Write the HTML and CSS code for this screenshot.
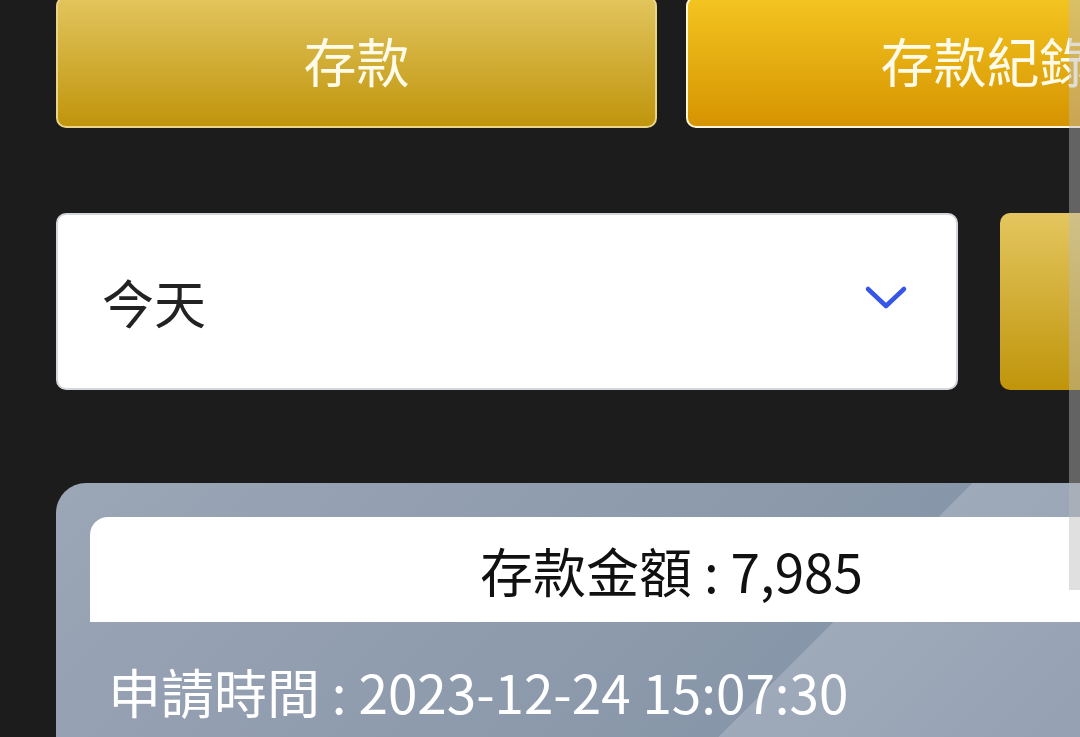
FILE: index.html
```html
<!DOCTYPE html>
<html lang="zh-Hant">
<head>
  <meta charset="UTF-8">
  <meta name="viewport" content="width=device-width, initial-scale=1.0">
  <title>存款紀錄</title>
  <link rel="stylesheet" href="styles.css">
</head>
<body>
  <div class="page">
    <div class="tabs">
      <button class="tab tab-gold">存款</button>
      <button class="tab tab-amber">存款紀錄</button>
    </div>

    <div class="filter">
      <div class="select">
        <span>今天</span>
        <svg class="chevron" width="44" height="26" viewBox="0 0 44 26">
          <path d="M4 4 L22 21 L40 4" fill="none" stroke="#3556e8" stroke-width="4.5" stroke-linecap="round" stroke-linejoin="round"/>
        </svg>
      </div>
      <button class="search"></button>
    </div>

    <div class="record">
      <div class="amount">存款金額 : 7,985</div>
      <div class="time">申請時間 : 2023-12-24 15:07:30</div>
    </div>
  </div>

  <div class="scrollbar"></div>
</body>
</html>
```

FILE: styles.css
```css
html, body {
  margin: 0;
  height: 100%;
  overflow: hidden;
}
body {
  background-color: #1c1c1c;
  font-family: "Noto Sans CJK TC", "Noto Sans", sans-serif;
}
.page {
  width: 1231px;
  padding: 0 56px;
  margin-top: -4px;
}
.tabs {
  display: grid;
  grid-template-columns: 1fr 1fr;
  gap: 29px;
}
.tab {
  height: 132px;
  border-radius: 10px;
  font-family: inherit;
  font-size: 53px;
  color: #fffbea;
  padding: 0 0 4px;
  white-space: nowrap;
}
.tab-gold {
  background: linear-gradient(#e2c55e, #c0950c);
  border: 2px solid #e9d488;
}
.tab-amber {
  background: linear-gradient(#f3c521, #d69400);
  border: 2px solid #fff6dc;
}

.filter {
  display: grid;
  grid-template-columns: 902px 1fr;
  gap: 42px;
  margin-top: 85px;
}
.select {
  height: 177px;
  box-sizing: border-box;
  background-color: #fff;
  border: 2px solid #d3d6dc;
  border-radius: 10px;
  display: flex;
  align-items: center;
  justify-content: space-between;
  padding: 0 48px 0 44px;
  font-size: 52px;
  color: #222;
}
.chevron {
  display: block;
  margin-top: -8px;
}
.search {
  height: 177px;
  border: none;
  border-radius: 10px;
  background: linear-gradient(#e3c65f, #c0950b);
}

.record {
  margin-top: 93px;
  padding: 34px 34px 0;
  height: 300px;
  border-radius: 30px 30px 0 0;
  background: linear-gradient(135deg, #9ba6b6 0, #8896a9 648px, #9ea9b9 648px, #8f9cae 1100px);
}
.amount {
  height: 105px;
  background-color: #fff;
  border-radius: 18px 18px 0 0;
  display: flex;
  align-items: center;
  justify-content: center;
  font-size: 53px;
  color: #111;
}
.time {
  padding: 33px 18px 0;
  font-size: 53px;
  line-height: 73px;
  color: #fff;
}

.scrollbar {
  position: fixed;
  top: 0;
  right: 0;
  width: 11px;
  height: 590px;
  background-color: rgba(186, 186, 186, 0.45);
}
```
